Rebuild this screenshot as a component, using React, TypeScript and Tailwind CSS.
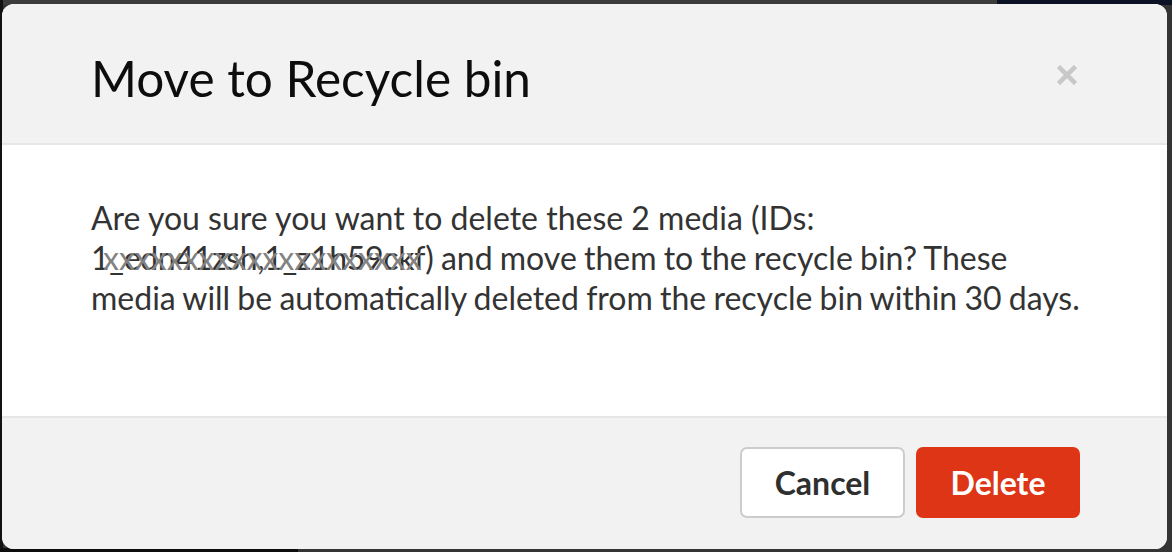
import React from "react";

export default function App() {
  return (
    <div
      className="relative w-[1172px] h-[552px] overflow-hidden bg-[#343434]"
      style={{ fontFamily: "Lato, 'Noto Sans', sans-serif" }}
    >
      {/* backdrop page hints */}
      <div className="flex h-[5px] w-full">
        <div className="w-[997px] bg-[#3c3c3c]" />
        <div className="flex-1 bg-[#0b1226]" />
      </div>
      <div className="absolute left-0 top-0 h-full w-[3px] bg-[#121212]" />
      <div className="absolute left-0 bottom-0 h-[4px] w-[298px] bg-[#0d0d0d]" />

      {/* modal */}
      <div className="absolute left-[2px] top-[4px] w-[1165px] h-[545px] rounded-[12px] overflow-hidden bg-white flex flex-col">
        <div className="h-[141px] shrink-0 box-border bg-[#f2f2f2] flex items-start justify-between pl-[89px] pr-[90px] pt-[45px] border-b-2 border-[#e6e6e6]">
          <h4 className="text-[49.5px] leading-[58px] text-[#0d0d0d] font-normal">
            Move to Recycle bin
          </h4>
          <button className="mt-[16px] w-[20px] h-[20px] flex items-center justify-center">
            <svg width="20" height="20" viewBox="0 0 20 20">
              <path d="M1.5 1.5 L18.5 18.5 M18.5 1.5 L1.5 18.5" stroke="#c8c8c8" strokeWidth="4.6" />
            </svg>
          </button>
        </div>
        <div className="h-[271px] shrink-0 box-border bg-white pl-[89px] pr-[70px] pt-[53px]">
          <p className="text-[32px] leading-[40px] text-[#333333]">
            Are you sure you want to delete these 2 media (IDs:{" "}
            <span className="relative inline-block tracking-[-0.3px]">
              1_edn41zsh,1_z1h59ckf
              <span className="absolute left-[12px] top-0 text-[#828282] tracking-[0px] whitespace-nowrap">
                xxxxxxxxxxxxxxxxxxxx
              </span>
            </span>
            <span className="[word-spacing:-1px]">
              ) and move them to the recycle bin? These media will be automatically deleted from the recycle bin within 30 days.
            </span>
          </p>
        </div>
        <div className="flex-1 box-border bg-[#f2f2f2] border-t-2 border-[#e6e6e6] flex items-start justify-end pr-[87px] pt-[29px] gap-[11px]">
          <button className="w-[165px] h-[71px] rounded-[7px] border-2 border-[#cccccc] bg-white text-[#2f2f2f] text-[32px] font-bold flex items-center justify-center">
            Cancel
          </button>
          <button className="w-[164px] h-[71px] rounded-[7px] bg-[#dd3515] text-white text-[32px] font-bold flex items-center justify-center">
            Delete
          </button>
        </div>
      </div>
    </div>
  );
}
